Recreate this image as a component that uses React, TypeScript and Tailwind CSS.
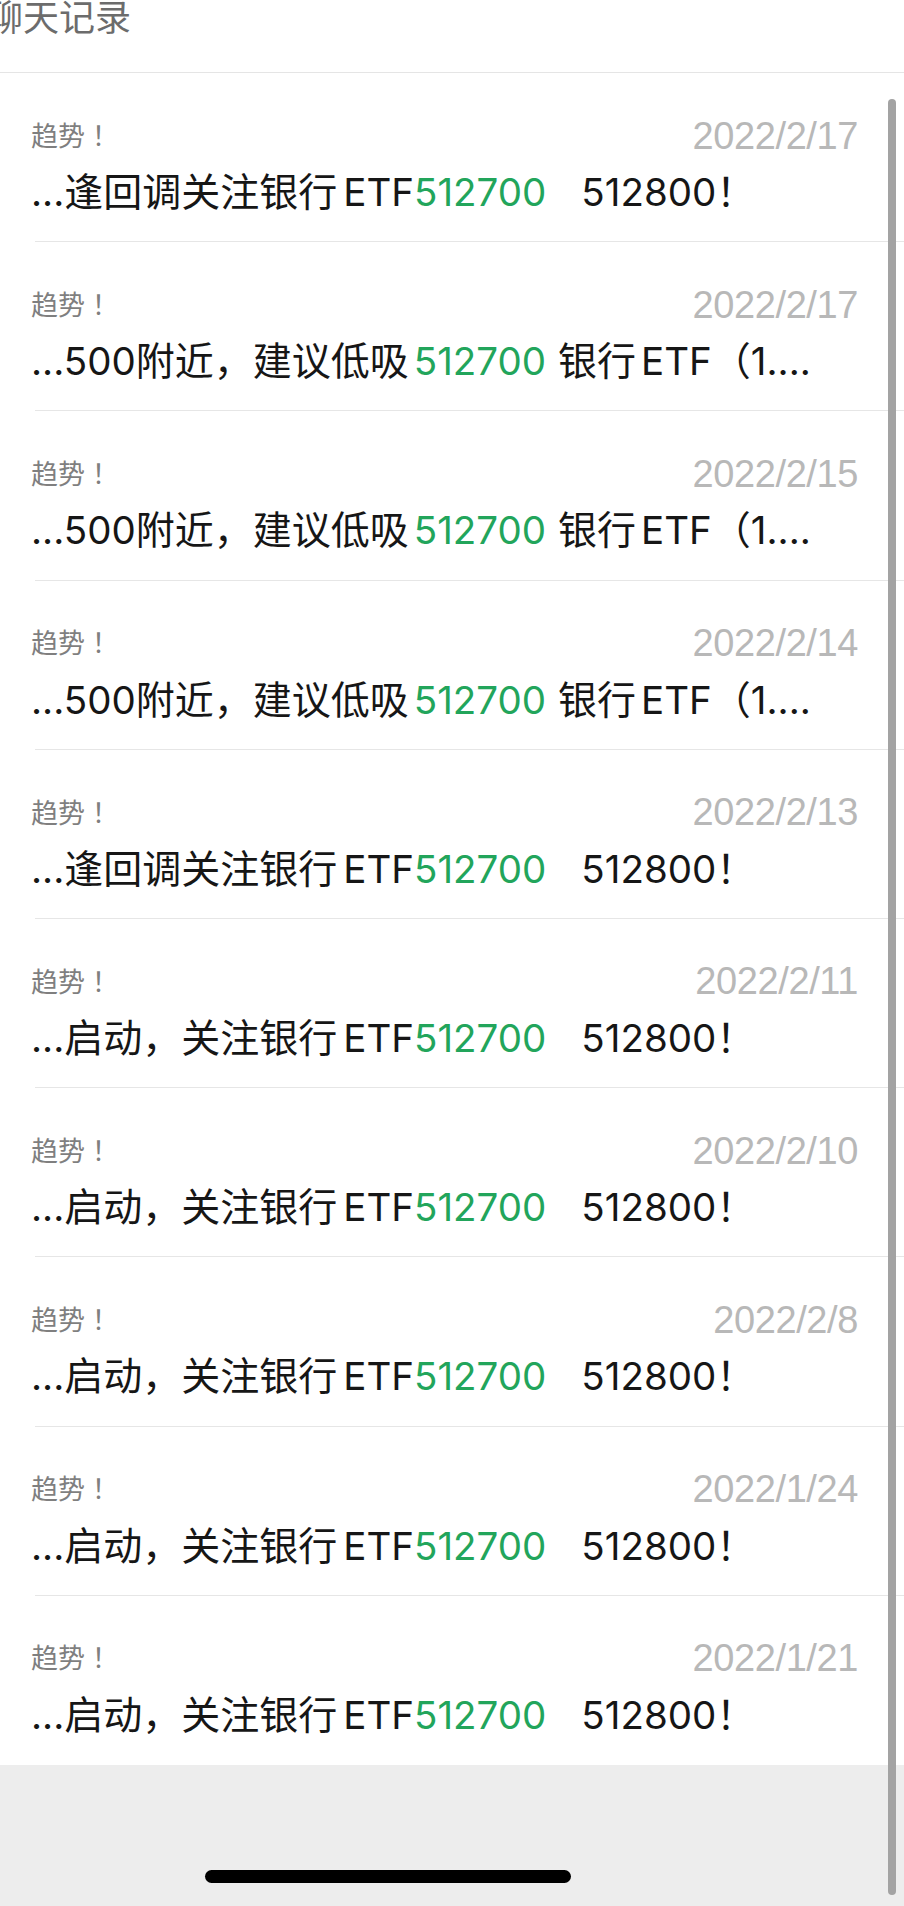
type Item = { date: string; kind: "a" | "b" | "c" };

const items: Item[] = [
  { date: "2022/2/17", kind: "a" },
  { date: "2022/2/17", kind: "b" },
  { date: "2022/2/15", kind: "b" },
  { date: "2022/2/14", kind: "b" },
  { date: "2022/2/13", kind: "a" },
  { date: "2022/2/11", kind: "c" },
  { date: "2022/2/10", kind: "c" },
  { date: "2022/2/8", kind: "c" },
  { date: "2022/1/24", kind: "c" },
  { date: "2022/1/21", kind: "c" },
];

function Snippet({ kind }: { kind: Item["kind"] }) {
  if (kind === "b") {
    return (
      <>
        <span>...500</span>
        <span className="text-[39px]">附近，建议低吸</span>
        <span className="ml-[5px] text-[#22a55b]">512700</span>
        <span className="ml-[12px] text-[39px]">银行</span>
        <span className="ml-[5px]">ETF</span>
        <span className="text-[39px]">（</span>
        <span>1....</span>
      </>
    );
  }
  return (
    <>
      <span>...</span>
      <span className="text-[39px]">{kind === "a" ? "逢回调关注银行" : "启动，关注银行"}</span>
      <span className="ml-[6px]">ETF</span>
      <span className="text-[#22a55b]">512700</span>
      <span className="ml-[35px]">512800</span>
      <span className="text-[39px]">！</span>
    </>
  );
}

function App() {
  return (
    <div className="relative w-[904px] h-[1906px] bg-white overflow-hidden font-['Inter','Noto_Sans_CJK_SC',sans-serif]">
      {/* header */}
      <div className="h-[73px] border-b border-[#e5e5e5]">
        <div className="-ml-[13px] text-[36px] leading-[36px] text-[#6c6c6c]">聊天记录</div>
      </div>

      {/* results */}
      <div>
        {items.map((it, i) => (
          <div key={i} className="h-[169.2px] flex flex-col">
            <div className="flex-1 pl-[31px] pr-[46px] pt-[43px]">
              <div className="flex justify-between items-center h-[40px]">
                <span className="text-[27px] text-[#7f7f7f]">
                  趋势<span className="font-['Noto_Sans_CJK_TC',sans-serif]">！</span>
                </span>
                <span className="font-['Liberation_Sans',sans-serif] text-[38px] text-[#b8b8b8] tracking-[-0.4px]">
                  {it.date}
                </span>
              </div>
              <div className="mt-[13px] h-[46px] leading-[46px] text-[38.5px] text-[#161616] whitespace-nowrap">
                <Snippet kind={it.kind} />
              </div>
            </div>
            {i < items.length - 1 && <div className="ml-[35px] h-px bg-[#e6e6e6]" />}
          </div>
        ))}
      </div>

      {/* bottom bar */}
      <div className="h-[141px] bg-[#ededed] pt-[105px]">
        <div className="ml-[205px] w-[366px] h-[13px] rounded-full bg-black" />
      </div>

      {/* scroll indicator */}
      <div className="absolute left-[888px] top-[99px] w-[8px] h-[1796px] rounded-full bg-[#a3a3a3]" />
    </div>
  );
}

export default App;
